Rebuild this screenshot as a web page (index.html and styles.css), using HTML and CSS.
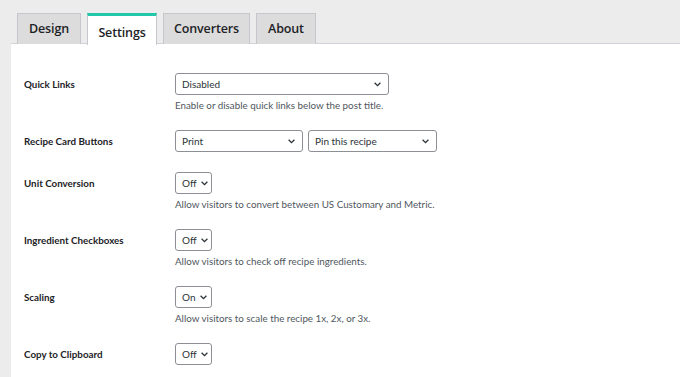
FILE: index.html
```html
<!DOCTYPE html>
<html lang="en">
<head>
<meta charset="utf-8">
<link rel="stylesheet" href="styles.css">
</head>
<body>
<div class="wrap">
  <nav class="tabs">
    <span class="tab t-design">Design</span>
    <span class="tab t-settings active">Settings</span>
    <span class="tab t-conv">Converters</span>
    <span class="tab t-about">About</span>
  </nav>
  <main class="panel">
    <div class="row">
      <div class="label">Quick Links</div>
      <div class="field">
        <div class="controls"><div class="select w-wide"><span>Disabled</span><svg class="chev" width="7" height="5" viewBox="0 0 7 5"><path d="M0.6 0.8 L3.5 3.7 L6.4 0.8" fill="none" stroke="#2c3338" stroke-width="1.3"/></svg></div></div>
        <div class="desc">Enable or disable quick links below the post title.</div>
      </div>
    </div>
    <div class="row">
      <div class="label">Recipe Card Buttons</div>
      <div class="field">
        <div class="controls">
          <div class="select w-mid"><span>Print</span><svg class="chev" width="7" height="5" viewBox="0 0 7 5"><path d="M0.6 0.8 L3.5 3.7 L6.4 0.8" fill="none" stroke="#2c3338" stroke-width="1.3"/></svg></div>
          <div class="select w-mid2"><span>Pin this recipe</span><svg class="chev" width="7" height="5" viewBox="0 0 7 5"><path d="M0.6 0.8 L3.5 3.7 L6.4 0.8" fill="none" stroke="#2c3338" stroke-width="1.3"/></svg></div>
        </div>
      </div>
    </div>
    <div class="row">
      <div class="label">Unit Conversion</div>
      <div class="field">
        <div class="controls"><div class="select small"><span>Off</span><svg class="chev" width="7" height="5" viewBox="0 0 7 5"><path d="M0.6 0.8 L3.5 3.7 L6.4 0.8" fill="none" stroke="#2c3338" stroke-width="1.3"/></svg></div></div>
        <div class="desc">Allow visitors to convert between US Customary and Metric.</div>
      </div>
    </div>
    <div class="row">
      <div class="label">Ingredient Checkboxes</div>
      <div class="field">
        <div class="controls"><div class="select small"><span>Off</span><svg class="chev" width="7" height="5" viewBox="0 0 7 5"><path d="M0.6 0.8 L3.5 3.7 L6.4 0.8" fill="none" stroke="#2c3338" stroke-width="1.3"/></svg></div></div>
        <div class="desc">Allow visitors to check off recipe ingredients.</div>
      </div>
    </div>
    <div class="row">
      <div class="label">Scaling</div>
      <div class="field">
        <div class="controls"><div class="select small"><span>On</span><svg class="chev" width="7" height="5" viewBox="0 0 7 5"><path d="M0.6 0.8 L3.5 3.7 L6.4 0.8" fill="none" stroke="#2c3338" stroke-width="1.3"/></svg></div></div>
        <div class="desc">Allow visitors to scale the recipe 1x, 2x, or 3x.</div>
      </div>
    </div>
    <div class="row">
      <div class="label">Copy to Clipboard</div>
      <div class="field">
        <div class="controls"><div class="select small"><span>Off</span><svg class="chev" width="7" height="5" viewBox="0 0 7 5"><path d="M0.6 0.8 L3.5 3.7 L6.4 0.8" fill="none" stroke="#2c3338" stroke-width="1.3"/></svg></div></div>
      </div>
    </div>
  </main>
</div>
</body>
</html>
```

FILE: styles.css
```css
* { box-sizing: border-box; }
html, body { margin: 0; height: 100%; }
body {
  background: #ececec;
  font-family: "Lato", "Noto Sans", sans-serif;
  color: #1d2327;
  overflow: hidden;
}
.wrap {
  padding-left: 11px;
  padding-top: 13px;
}
.tabs {
  display: flex;
  gap: 6px;
  padding-left: 6px;
  height: 31px;
}
.tab {
  display: flex;
  align-items: center;
  justify-content: center;
  height: 31px;
  padding: 0 0 1px;
  background: #dcdcdc;
  border: 1px solid #c6c6cc;
  border-bottom: none;
  font-family: "Open Sans", "Noto Sans", sans-serif;
  font-size: 12.5px;
  font-weight: 600;
  letter-spacing: -0.15px;
  color: #1d2327;
}
.t-design { width: 64px; }
.t-settings { width: 70px; }
.t-conv { width: 87px; }
.t-about { width: 60px; }
.tab.active {
  position: relative;
  z-index: 1;
  background: #fff;
  border-top: 3px solid #22c7a9;
  padding-top: 4px;
  height: 32px;
}
.panel {
  background: #fff;
  border-top: 1px solid #d3d2da;
  margin-top: -1px;
  padding: 29px 0 0 13px;
  height: 340px;
}
.row {
  display: grid;
  grid-template-columns: 151px 1fr;
  margin-bottom: 20px;
}
.label {
  font-size: 9.8px;
  font-weight: 700;
  line-height: 22px;
}
.controls {
  display: flex;
  gap: 5px;
}
.select {
  display: flex;
  align-items: center;
  justify-content: space-between;
  height: 22px;
  padding: 0 7px 0 6px;
  border: 1px solid #8c8f94;
  border-radius: 3px;
  font-size: 10px;
  color: #2c3338;
  background: #fff;
}
.select.small {
  gap: 4px;
  justify-content: flex-start;
  width: 37px;
  padding: 0 4px 0 6px;
}
.w-wide { width: 214px; }
.w-mid { width: 128px; }
.w-mid2 { width: 129px; }
.chev { flex: none; }
.desc {
  margin-top: 3px;
  margin-bottom: -2px;
  font-size: 9.8px;
  line-height: 14px;
  color: #50575e;
}
```
